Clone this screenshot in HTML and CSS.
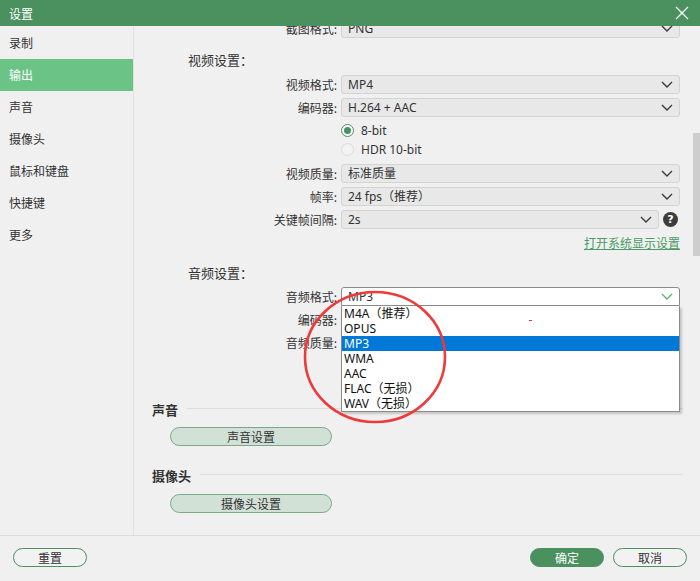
FILE: index.html
```html
<!DOCTYPE html>
<html lang="zh-CN">
<head>
<meta charset="utf-8">
<title>设置</title>
<link rel="stylesheet" href="styles.css">
</head>
<body>
<div class="window">
  <header class="titlebar">
    <span class="title">设置</span>
    <svg class="close" width="14" height="14" viewBox="0 0 14 14"><path d="M1 1L13 13M13 1L1 13" stroke="#fff" stroke-width="1.2" fill="none"/></svg>
  </header>
  <div class="body">
    <nav class="sidebar">
      <div class="nav-item">录制</div>
      <div class="nav-item active">输出</div>
      <div class="nav-item">声音</div>
      <div class="nav-item">摄像头</div>
      <div class="nav-item">鼠标和键盘</div>
      <div class="nav-item">快捷键</div>
      <div class="nav-item">更多</div>
    </nav>
    <main class="content">
      <div class="scroll">
        <div class="inner">
          <div class="row first">
            <label class="lbl">截图格式:</label>
            <div class="select"><span>PNG</span><svg class="chev" viewBox="0 0 12 7"><path d="M1 1L6 6L11 1" /></svg></div>
          </div>
          <div class="group-title">视频设置：</div>
          <div class="row gap6">
            <label class="lbl">视频格式:</label>
            <div class="select"><span>MP4</span><svg class="chev" viewBox="0 0 12 7"><path d="M1 1L6 6L11 1" /></svg></div>
          </div>
          <div class="row">
            <label class="lbl">编码器:</label>
            <div class="select"><span>H.264 + AAC</span><svg class="chev" viewBox="0 0 12 7"><path d="M1 1L6 6L11 1" /></svg></div>
          </div>
          <div class="radio-row r1"><span class="radio on"></span><span>8-bit</span></div>
          <div class="radio-row r2"><span class="radio"></span><span>HDR 10-bit</span></div>
          <div class="row gap6">
            <label class="lbl">视频质量:</label>
            <div class="select"><span>标准质量</span><svg class="chev" viewBox="0 0 12 7"><path d="M1 1L6 6L11 1" /></svg></div>
          </div>
          <div class="row">
            <label class="lbl">帧率:</label>
            <div class="select"><span>24 fps（推荐）</span><svg class="chev" viewBox="0 0 12 7"><path d="M1 1L6 6L11 1" /></svg></div>
          </div>
          <div class="row">
            <label class="lbl">关键帧间隔:</label>
            <div class="ctrl-help">
              <div class="select"><span>2s</span><svg class="chev" viewBox="0 0 12 7"><path d="M1 1L6 6L11 1" /></svg></div>
              <span class="help">?</span>
            </div>
          </div>
          <div class="link-row"><a class="link">打开系统显示设置</a></div>
          <div class="group-title audio">音频设置：</div>
          <div class="row gap5">
            <label class="lbl">音频格式:</label>
            <div class="dropdown-wrap">
              <div class="select open"><span>MP3</span><svg class="chev green" viewBox="0 0 12 7"><path d="M1 1L6 6L11 1" /></svg></div>
              <ul class="dropdown">
                <li>M4A（推荐）</li>
                <li>OPUS</li>
                <li class="sel">MP3</li>
                <li>WMA</li>
                <li>AAC</li>
                <li>FLAC（无损）</li>
                <li>WAV（无损）</li>
                <span class="dash"></span>
              </ul>
            </div>
          </div>
          <div class="row">
            <label class="lbl">编码器:</label>
            <div class="select"></div>
          </div>
          <div class="row">
            <label class="lbl">音频质量:</label>
            <div class="select"></div>
          </div>
          <div class="section sec-sound">
            <div class="sec-head"><span>声音</span><i class="line"></i></div>
            <button class="pill">声音设置</button>
          </div>
          <div class="section sec-cam">
            <div class="sec-head"><span>摄像头</span><i class="line"></i></div>
            <button class="pill">摄像头设置</button>
          </div>
        </div>
      </div>
      <div class="scrollbar"><div class="thumb"></div></div>
    </main>
  </div>
  <footer class="footer">
    <button class="btn">重置</button>
    <div class="btn-group">
      <button class="btn primary">确定</button>
      <button class="btn">取消</button>
    </div>
  </footer>
  <svg class="annot" width="150" height="140" viewBox="0 0 150 140"><ellipse cx="73" cy="68" rx="70" ry="65" fill="none" stroke="#ee3a3a" stroke-width="2.6"/></svg>
</div>
</body>
</html>
```

FILE: styles.css
```css
* { box-sizing: border-box; }
html, body { margin: 0; padding: 0; }
body {
  width: 700px;
  height: 581px;
  background: #f0f0f0;
  font-family: "Noto Sans", "Noto Sans CJK SC", sans-serif;
  font-size: 12px;
  color: #333;
  overflow: hidden;
}
.window {
  position: relative;
  width: 700px;
  height: 581px;
  display: flex;
  flex-direction: column;
}
.titlebar {
  height: 26px;
  flex: none;
  background: #4b905f;
  display: flex;
  align-items: center;
  justify-content: space-between;
  padding: 0 11px 0 9px;
}
.title {
  color: #fff;
  font-family: "Noto Sans CJK SC", sans-serif;
  font-size: 12px;
}
.close { display: block; }
.body {
  flex: 1;
  display: flex;
  min-height: 0;
}
.sidebar {
  width: 134px;
  flex: none;
  border-right: 1px solid #e2e2e2;
  padding-top: 1px;
}
.nav-item {
  height: 32px;
  line-height: 32px;
  padding-left: 9px;
  font-family: "Noto Sans CJK SC", sans-serif;
  font-size: 12px;
  color: #333;
}
.nav-item.active {
  background: #6bc485;
  color: #fff;
}
.content {
  flex: 1;
  display: flex;
  min-width: 0;
}
.scroll {
  flex: 1;
  overflow: hidden;
}
.inner {
  width: 556px;
}
.scrollbar {
  width: 10px;
  flex: none;
  display: flex;
  justify-content: flex-end;
}
.thumb {
  width: 7px;
  height: 123px;
  margin-top: 107px;
  background: #cdcdcd;
}
.row {
  display: grid;
  grid-template-columns: 203px 339px;
  column-gap: 4px;
  align-items: center;
  height: 19px;
  margin-top: 4px;
}
.row.first { margin-top: -7px; }
.row.gap6 { margin-top: 6px; }
.row.gap5 { margin-top: 5px; height: 19px; }
.lbl {
  text-align: right;
  font-family: "Noto Sans CJK SC", sans-serif;
  font-size: 12px;
  color: #333;
  line-height: 19px;
}
.select {
  height: 19px;
  border: 1px solid #d3d3d3;
  border-radius: 3px;
  background: #e8e8e8;
  display: flex;
  align-items: center;
  justify-content: space-between;
  padding: 0 6px 0 6px;
  line-height: 17px;
  color: #333;
  font-size: 12px;
}
.select span { font-family: "Noto Sans", "Noto Sans CJK SC", sans-serif; }
.chev {
  width: 12px;
  height: 7px;
  fill: none;
  stroke: #3a3a3a;
  stroke-width: 1.4;
}
.chev.green { stroke: #5ab873; }
.ctrl-help {
  display: flex;
  align-items: center;
  gap: 4px;
}
.ctrl-help .select { width: 318px; }
.help {
  width: 15px;
  height: 15px;
  border-radius: 50%;
  background: #3d3d3d;
  color: #fff;
  font-family: "DejaVu Sans", sans-serif;
  font-weight: bold;
  font-size: 11px;
  line-height: 15px;
  text-align: center;
}
.group-title {
  margin-top: 13px;
  padding-left: 54px;
  height: 18px;
  line-height: 18px;
  font-family: "Noto Sans CJK SC", sans-serif;
  font-size: 13px;
  color: #333;
}
.group-title.audio { margin-top: 13px; }
.radio-row {
  height: 18px;
  display: flex;
  align-items: center;
  padding-left: 207px;
  gap: 7px;
  font-size: 12px;
  color: #333;
}
.radio-row.r1 { margin-top: 4px; }
.radio-row.r2 { margin-top: 1px; }
.radio {
  width: 13px;
  height: 13px;
  border-radius: 50%;
  border: 1px solid #dcdcdc;
  background: #f2f2f2;
  display: flex;
  align-items: center;
  justify-content: center;
}
.radio.on {
  border: 1.5px solid #4b905f;
  background: #fff;
}
.radio.on::after {
  content: "";
  width: 7px;
  height: 7px;
  border-radius: 50%;
  background: #4b905f;
}
.link-row {
  margin-top: 6px;
  height: 16px;
  line-height: 16px;
  width: 546px;
  text-align: right;
}
.link {
  color: #4a9a66;
  text-decoration: underline;
  font-family: "Noto Sans CJK SC", sans-serif;
  font-size: 12px;
}
.dropdown-wrap { position: relative; }
.select.open {
  background: #fff;
  border-color: #8a8a8a;
  border-radius: 3px 3px 0 0;
}
.dropdown {
  position: absolute;
  left: 0;
  top: 19px;
  width: 339px;
  margin: 0;
  padding: 0;
  list-style: none;
  background: #fff;
  border: 1px solid #8a8a8a;
  border-top: none;
  box-shadow: 2px 2px 2px rgba(0,0,0,0.18);
  z-index: 5;
}
.dropdown li {
  height: 15px;
  line-height: 15px;
  padding-left: 2px;
  color: #111;
  font-size: 12px;
  font-family: "Noto Sans", "Noto Sans CJK SC", sans-serif;
}
.dropdown li.sel {
  background: #0078d7;
  color: #fff;
}
.dash {
  position: absolute;
  left: 187px;
  top: 14px;
  width: 3px;
  height: 1px;
  background: #e33;
}
.section { padding-left: 18px; padding-right: 7px; }
.sec-sound { margin-top: 48px; }
.sec-cam { margin-top: 20px; }
.sec-head {
  display: flex;
  align-items: center;
  height: 18px;
  font-family: "Noto Sans CJK SC", sans-serif;
  font-weight: bold;
  font-size: 13px;
  color: #333;
}
.sec-head .line {
  flex: 1;
  height: 1px;
  background: #dedede;
  margin-left: 9px;
  margin-top: -2px;
}
.pill {
  display: block;
  margin-top: 9px;
  margin-left: 18px;
  width: 162px;
  height: 19px;
  border-radius: 10px;
  border: 1px solid #79a986;
  background: #d2e1d6;
  font-family: "Noto Sans CJK SC", sans-serif;
  font-size: 12px;
  color: #333;
  padding: 0;
  line-height: 17px;
}
.sec-cam .pill { margin-top: 10px; }
.footer {
  height: 46px;
  flex: none;
  border-top: 1px solid #dcdcdc;
  display: flex;
  justify-content: space-between;
  align-items: flex-start;
  padding: 12px 13px 0 13px;
}
.btn-group { display: flex; gap: 9px; }
.btn {
  width: 74px;
  height: 19px;
  border-radius: 10px;
  border: 1.5px solid #4b905f;
  background: #f2f2f2;
  font-family: "Noto Sans CJK SC", sans-serif;
  font-size: 12px;
  color: #333;
  padding: 0;
  line-height: 16px;
}
.btn.primary {
  background: #4b905f;
  color: #fff;
}
.annot {
  position: absolute;
  left: 302px;
  top: 289px;
  z-index: 10;
}
```
